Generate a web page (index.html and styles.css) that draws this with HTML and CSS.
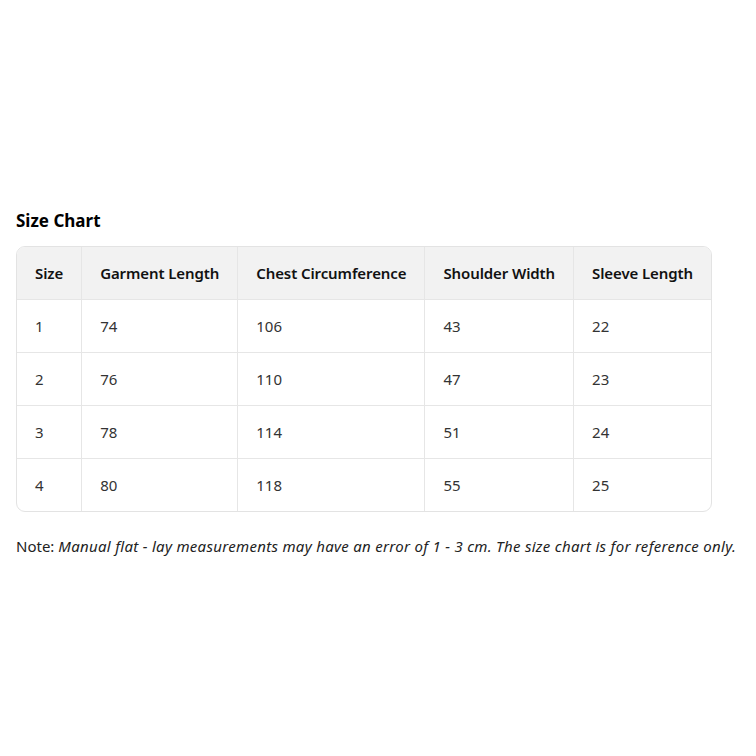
FILE: index.html
```html
<!DOCTYPE html>
<html>
<head>
<meta charset="utf-8">
<link rel="stylesheet" href="styles.css">
</head>
<body>
<div class="wrap">
  <h2 class="title">Size Chart</h2>
  <table class="chart">
    <thead>
      <tr><th>Size</th><th>Garment Length</th><th>Chest Circumference</th><th>Shoulder Width</th><th>Sleeve Length</th></tr>
    </thead>
    <tbody>
      <tr><td>1</td><td>74</td><td>106</td><td>43</td><td>22</td></tr>
      <tr><td>2</td><td>76</td><td>110</td><td>47</td><td>23</td></tr>
      <tr><td>3</td><td>78</td><td>114</td><td>51</td><td>24</td></tr>
      <tr><td>4</td><td>80</td><td>118</td><td>55</td><td>25</td></tr>
    </tbody>
  </table>
  <p class="note">Note: <em>Manual flat - lay measurements may have an error of 1 - 3 cm. The size chart is for reference only.</em></p>
</div>
</body>
</html>
```
FILE: styles.css
```css
html, body {
  margin: 0;
  padding: 0;
  background: #fff;
}
body {
  font-family: "Noto Sans", "Open Sans", sans-serif;
  color: #222;
}
.wrap {
  padding: 209px 16px 0 16px;
}
.title {
  font-size: 17px;
  font-weight: 700;
  color: #000;
  margin: 0 0 13px 0;
  line-height: 24px;
}
.chart {
  border-collapse: separate;
  border-spacing: 0;
  border: 1px solid #e3e3e3;
  border-radius: 9px;
  overflow: hidden;
  font-size: 15px;
}
.chart th, .chart td {
  text-align: left;
  padding: 16px 18px 15px 18px;
  line-height: 21px;
  border-right: 1px solid #e6e6e6;
  border-bottom: 1px solid #e6e6e6;
  white-space: nowrap;
}
.chart th:last-child, .chart td:last-child {
  border-right: none;
}
.chart tbody tr:last-child td {
  border-bottom: none;
}
.chart th {
  background: #f2f2f2;
  font-weight: 600;
  color: #111;
  letter-spacing: -0.1px;
}
.chart td {
  color: #333;
}
.note {
  margin: 24px 0 0 0;
  font-size: 15px;
  line-height: 21px;
  color: #222;
  white-space: nowrap;
}
.note em {
  font-style: italic;
  letter-spacing: 0.3px;
}
```
